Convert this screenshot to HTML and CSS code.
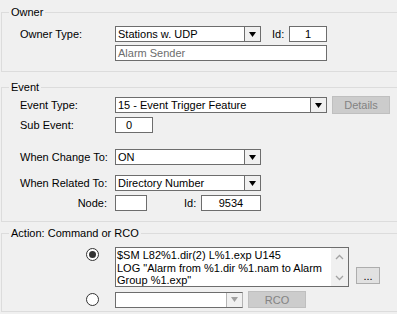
FILE: index.html
```html
<!DOCTYPE html>
<html lang="en">
<head>
    <meta charset="UTF-8">
    <meta name="viewport" content="width=device-width, initial-scale=1.0">
    <title>Alarm Event</title>
    <link rel="stylesheet" href="styles.css">
</head>
<body>
    <fieldset class="group group-owner">
        <legend>Owner</legend>
        <div class="row row-owner-type">
            <span class="label">Owner Type:</span>
            <div class="combo combo-short">
                <span class="combo-value">Stations w. UDP</span>
                <span class="combo-drop"><svg width="7" height="5" viewBox="0 0 7 5"><path d="M0 0H7L3.5 5Z" fill="#000"/></svg></span>
            </div>
            <span class="label-id">Id:</span>
            <div class="field field-id centered">1</div>
        </div>
        <div class="row row-owner-name">
            <span class="label"></span>
            <div class="field field-wide muted">Alarm Sender</div>
        </div>
    </fieldset>

    <fieldset class="group group-event">
        <legend>Event</legend>
        <div class="row row-event-type">
            <span class="label">Event Type:</span>
            <div class="combo combo-wide">
                <span class="combo-value">15 - Event Trigger Feature</span>
                <span class="combo-drop"><svg width="7" height="5" viewBox="0 0 7 5"><path d="M0 0H7L3.5 5Z" fill="#000"/></svg></span>
            </div>
            <button class="btn btn-disabled btn-details">Details</button>
        </div>
        <div class="row row-sub-event">
            <span class="label">Sub Event:</span>
            <div class="field field-sub">0</div>
        </div>
        <div class="row row-change">
            <span class="label">When Change To:</span>
            <div class="combo combo-short">
                <span class="combo-value">ON</span>
                <span class="combo-drop"><svg width="7" height="5" viewBox="0 0 7 5"><path d="M0 0H7L3.5 5Z" fill="#000"/></svg></span>
            </div>
        </div>
        <div class="row row-related">
            <span class="label">When Related To:</span>
            <div class="combo combo-short">
                <span class="combo-value">Directory Number</span>
                <span class="combo-drop"><svg width="7" height="5" viewBox="0 0 7 5"><path d="M0 0H7L3.5 5Z" fill="#000"/></svg></span>
            </div>
        </div>
        <div class="row row-node">
            <span class="label label-right">Node:</span>
            <div class="field field-node"></div>
            <span class="label-id label-id-node">Id:</span>
            <div class="field field-dir centered">9534</div>
        </div>
    </fieldset>

    <fieldset class="group group-action">
        <legend>Action: Command or RCO</legend>
        <div class="row row-command">
            <span class="radio-cell"><span class="radio checked"></span></span>
            <div class="memo">
                <div class="memo-text">$SM L82%1.dir(2) L%1.exp U145<br>LOG "Alarm from %1.dir %1.nam to Alarm Group %1.exp"</div>
                <div class="memo-scroll">
                    <svg width="9" height="6" viewBox="0 0 9 6"><path d="M1 5L4.5 1.5L8 5" fill="none" stroke="#a3a3a3" stroke-width="1.3"/></svg>
                    <svg width="9" height="6" viewBox="0 0 9 6"><path d="M1 1L4.5 4.5L8 1" fill="none" stroke="#a3a3a3" stroke-width="1.3"/></svg>
                </div>
            </div>
            <button class="btn btn-more">...</button>
        </div>
        <div class="row row-rco">
            <span class="radio-cell"><span class="radio"></span></span>
            <div class="combo combo-rco">
                <span class="combo-value"></span>
                <span class="combo-drop combo-drop-disabled"><svg width="7" height="5" viewBox="0 0 7 5"><path d="M0 0H7L3.5 5Z" fill="#a0a0a0"/></svg></span>
            </div>
            <button class="btn btn-disabled btn-rco">RCO</button>
        </div>
    </fieldset>
</body>
</html>
```

FILE: styles.css
```css
body {
    margin: 0;
    padding: 6px 0 0 0;
    background: #f0f0f0;
    color: #000;
    font-family: "Liberation Sans", Arial, sans-serif;
    font-size: 11px;
    overflow: hidden;
}

/* group boxes run off the right edge, so no right border */
.group {
    box-sizing: border-box;
    margin: 0 0 0 1px;
    padding: 0 0 10px 0;
    width: 396px;
    border: 1px solid #dcdcdc;
    border-right: none;
    min-inline-size: 0;
}

.group legend {
    margin-left: 7px;
    padding: 0 2px;
    line-height: 12px;
}

.group-event {
    margin-top: 9px;
}

.group-action {
    margin-top: 5px;
    padding-bottom: 3px;
}

.row {
    display: flex;
    align-items: center;
    padding-left: 18px;
}

.label {
    width: 95px;
    flex: none;
}

.label-right {
    width: 87px;
    padding-right: 8px;
    text-align: right;
}

.label-id {
    margin-left: 11px;
    width: 17px;
}

.label-id-node {
    margin-left: 37px;
}

/* text boxes */
.field {
    box-sizing: border-box;
    height: 16px;
    line-height: 14px;
    padding: 0 2px;
    background: #fff;
    border: 1px solid #6d6d6d;
    white-space: nowrap;
}

.centered {
    text-align: center;
}

.muted {
    color: #6d6d6d;
}

.field-id { width: 38px; }
.field-wide { width: 212px; }
.field-sub { width: 38px; padding-left: 10px; }
.field-node { width: 32px; }
.field-dir { width: 60px; }

/* combo boxes */
.combo {
    box-sizing: border-box;
    height: 16px;
    display: flex;
    background: #fff;
    border: 1px solid #6d6d6d;
}

.combo-value {
    flex: 1;
    line-height: 14px;
    padding-left: 2px;
    white-space: nowrap;
    overflow: hidden;
}

.combo-drop {
    width: 15px;
    display: flex;
    align-items: center;
    justify-content: center;
    border-left: 1px solid #6d6d6d;
    background: #f0f0f0;
}

.combo-drop-disabled {
    border-left-color: #b4b4b4;
}

.combo-short { width: 146px; }
.combo-wide { width: 212px; }
.combo-rco { width: 128px; border-right-color: #b4b4b4; }

/* buttons */
.btn {
    box-sizing: border-box;
    margin: 0;
    padding: 0;
    font: inherit;
    background: #e1e1e1;
    border: 1px solid #adadad;
    color: #000;
}

.btn-disabled {
    background: #cccccc;
    border-color: #bfbfbf;
    color: #838383;
}

.btn-details {
    margin-left: 5px;
    width: 58px;
    height: 18px;
}

.btn-rco {
    margin-left: 5px;
    width: 58px;
    height: 17px;
}

.btn-more {
    align-self: flex-end;
    margin: 0 0 3px 7px;
    width: 24px;
    height: 17px;
    line-height: 12px;
}

/* event rows */
.row-owner-type { margin-top: 8px; }
.row-owner-name { margin-top: 3px; }

.row-event-type { margin-top: 3px; height: 18px; }
.row-sub-event { margin-top: 3px; }
.row-change { margin-top: 16px; }
.row-related { margin-top: 10px; }
.row-node { margin-top: 4px; }

/* action rows */
.row-command {
    margin-top: 8px;
    align-items: flex-start;
}

.row-rco {
    margin-top: 4px;
    height: 17px;
}

.radio-cell {
    width: 95px;
    flex: none;
    display: flex;
}

.radio {
    box-sizing: border-box;
    margin-left: 66px;
    width: 13px;
    height: 13px;
    border: 1px solid #333;
    border-radius: 50%;
    background: #fff;
    display: flex;
    align-items: center;
    justify-content: center;
}

.row-command .radio {
    margin-top: 1px;
}

.radio.checked::after {
    content: "";
    width: 7px;
    height: 7px;
    border-radius: 50%;
    background: #333;
}

.memo {
    box-sizing: border-box;
    width: 234px;
    height: 40px;
    display: flex;
    background: #fff;
    border: 1px solid #6d6d6d;
}

.memo-text {
    flex: 1;
    padding: 1px 0 0 1px;
    line-height: 12.5px;
    overflow: hidden;
}

.memo-scroll {
    width: 17px;
    display: flex;
    flex-direction: column;
    justify-content: space-between;
    align-items: center;
    padding: 6px 0 5px;
    box-sizing: border-box;
    background: #f0f0f0;
}
```
